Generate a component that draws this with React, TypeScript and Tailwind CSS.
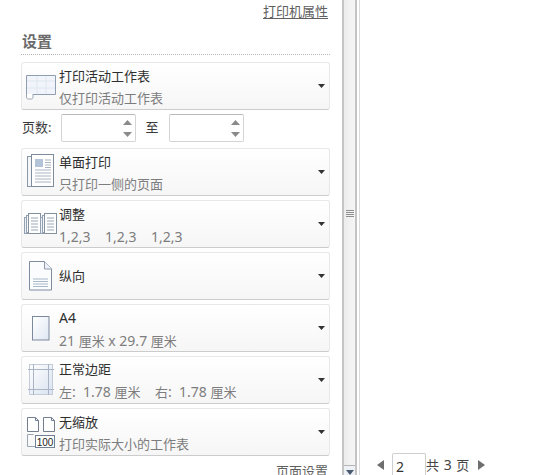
import React from "react";

const font = { fontFamily: '"Noto Sans", "Noto Sans CJK SC", sans-serif' };

function Caret() {
  return (
    <svg width="7" height="4" viewBox="0 0 7 4" className="shrink-0">
      <path d="M0 0h7L3.500 4z" fill="#333" />
    </svg>
  );
}

function SheetIcon() {
  return (
    <svg width="32" height="28" viewBox="0 0 32 28">
      <path d="M1.500 3.500h29v19h-25c-2 0-3 1.500-4 3z" fill="#f1f5fb" stroke="#8f9db0" />
      <path d="M1.500 22v3.500c0 1 1 1.500 2 1.500h3c1 0 1.500-1 1.500-2v-3" fill="#fff" stroke="#9aa6b6" />
      <path d="M12 4v18M21 4v18M2 9h28M2 16h28" stroke="#dfe6ef" />
    </svg>
  );
}

function SingleIcon() {
  return (
    <svg width="28" height="36" viewBox="0 0 28 36">
      <rect x="0.500" y="2.500" width="21" height="30" fill="#f4f6f9" stroke="#8b98a8" />
      <rect x="4.500" y="0.500" width="22" height="32" fill="#fff" stroke="#7f8c9c" />
      <rect x="8" y="5" width="8" height="8" fill="#b3c3d8" />
      <path d="M18 6h6M18 8.500h6M18 11h6M18 13.500h6M8 16h16M8 19h16M8 22h16M8 25h16M8 28h16" stroke="#a9b4c2" />
    </svg>
  );
}

function CollateIcon() {
  return (
    <svg width="34" height="24" viewBox="0 0 34 24">
      {[0, 16].map((x) => (
        <g key={x} transform={`translate(${x} 0)`}>
          <rect x="0.500" y="5.500" width="11" height="16" fill="#eef2f7" stroke="#93a0af" />
          <rect x="2.500" y="3.500" width="11" height="17" fill="#f4f6f9" stroke="#93a0af" />
          <rect x="4.500" y="1.500" width="12" height="20" fill="#fff" stroke="#84919f" />
          <path d="M7 6h7M7 9h7M7 12h7M7 15h7M7 18h7" stroke="#9aa7b7" />
        </g>
      ))}
    </svg>
  );
}

function PortraitIcon() {
  return (
    <svg width="24" height="30" viewBox="0 0 24 30">
      <path d="M0.500 0.500h15l7 7.500v21h-22z" fill="#fbfcfe" stroke="#7f8c9f" />
      <path d="M15.500 0.500v7.500h7" fill="#eef2f8" stroke="#8f9bab" />
      <path d="M4 18h15M4 20.500h15M4 23h15M4 25.500h15" stroke="#a9b8cb" />
    </svg>
  );
}

function A4Icon() {
  return (
    <svg width="18" height="25" viewBox="0 0 18 25">
      <defs>
        <linearGradient id="a4" x1="0" y1="0" x2="1" y2="1">
          <stop offset="0" stopColor="#ffffff" />
          <stop offset="1" stopColor="#dfe7f3" />
        </linearGradient>
      </defs>
      <rect x="0.500" y="0.500" width="16.500" height="23.500" fill="url(#a4)" stroke="#7c899b" />
    </svg>
  );
}

function MarginIcon() {
  return (
    <svg width="26" height="32" viewBox="0 0 26 32">
      <defs>
        <linearGradient id="mg" x1="0" y1="0" x2="1" y2="1">
          <stop offset="0" stopColor="#ffffff" />
          <stop offset="1" stopColor="#d9e2ef" />
        </linearGradient>
      </defs>
      <rect x="1.500" y="0.500" width="23" height="30" fill="url(#mg)" stroke="#c3ccd8" />
      <path d="M0 5.500h26M0 25.500h26M5.500 0v31M20.500 0v31" stroke="#a9b5c6" />
    </svg>
  );
}

function ScaleIcon() {
  return (
    <svg width="30" height="32" viewBox="0 0 30 32">
      <path d="M1.500 1.500h8l3 3v11h-11z" fill="#fff" stroke="#737f8e" />
      <path d="M9.500 1.500v3h3" fill="none" stroke="#737f8e" />
      <path d="M17.500 1.500h8l3 3v11h-11z" fill="#fff" stroke="#737f8e" />
      <path d="M25.500 1.500v3h3" fill="none" stroke="#737f8e" />
      <path d="M1.500 30.500v-12h6M1.500 30.500h8" fill="none" stroke="#9aa5b3" />
      <rect x="9.500" y="19.500" width="19" height="12" fill="#fff" stroke="#6f8097" />
      <text x="19" y="29.500" textAnchor="middle" fontSize="10" fontFamily="Liberation Sans" fill="#222">100</text>
    </svg>
  );
}

type CardProps = {
  icon: React.ReactNode;
  title: React.ReactNode;
  sub?: React.ReactNode;
};

function Card({ icon, title, sub }: CardProps) {
  return (
    <div className="h-12 shrink-0 flex items-center rounded-[3px] border border-[#e8e8e8] border-b-[#cccccc] bg-gradient-to-b from-[#ffffff] to-[#f6f6f7]">
      <div className="w-[37px] shrink-0 flex justify-center items-center pl-[1px]">{icon}</div>
      <div className={`flex-1 min-w-0 flex flex-col justify-center gap-[5px] text-[13px] leading-[17px] ${sub ? "pt-[2px]" : ""}`}>
        <div className="text-[#2e2e2e]">{title}</div>
        {sub ? <div className="text-[#7d7d7d] whitespace-pre">{sub}</div> : null}
      </div>
      <div className="w-[11px] shrink-0 flex">
        <Caret />
      </div>
    </div>
  );
}

function Spin({ className }: { className: string }) {
  return (
    <div className={`${className} h-[28px] rounded-[2px] border border-[#d4d4d4] border-t-[#b9b9b9] bg-white flex flex-col items-end justify-center gap-[7px] pr-[3px]`}>
      <svg width="9" height="5" viewBox="0 0 9 5">
        <path d="M4.500 0L9 5H0z" fill="#8a8a8a" />
      </svg>
      <svg width="9" height="5" viewBox="0 0 9 5">
        <path d="M0 0h9L4.500 5z" fill="#8a8a8a" />
      </svg>
    </div>
  );
}

function L({ children }: { children: React.ReactNode }) {
  return <span className="text-[14px]">{children}</span>;
}

export default function App() {
  return (
    <div className="w-[539px] h-[475px] overflow-hidden bg-white flex" style={font}>
      <div className="w-[342px] shrink-0 h-full overflow-hidden pl-[21px] pr-[12px] pt-[3px] flex flex-col">
        <div className="text-right text-[13px] leading-[17px] text-[#5f5f5f] underline underline-offset-2 pr-[2px]">打印机属性</div>
        <div className="mt-[12px] pl-[1px] text-[15px] leading-[18px] font-bold text-[#6a6a6a]">设置</div>
        <div className="mt-[4px] border-b border-dotted border-[#b5b5b5]" />
        <div className="mt-[7px]">
          <Card icon={<SheetIcon />} title="打印活动工作表" sub="仅打印活动工作表" />
        </div>
        <div className="mt-[4px] h-[28px] shrink-0 flex items-center text-[13px] text-[#3a3a3a]">
          <span className="w-[40px] pl-[1px]">页数:</span>
          <Spin className="w-[75px]" />
          <span className="w-[33px] text-center pr-[1px]">至</span>
          <Spin className="w-[75px]" />
        </div>
        <div className="mt-[6px] flex flex-col gap-1">
          <Card icon={<SingleIcon />} title="单面打印" sub="只打印一侧的页面" />
          <Card
            icon={<CollateIcon />}
            title="调整"
            sub={
              <span className="flex text-[14px]">
                <span className="w-[46px]">1,2,3</span>
                <span className="w-[46px]">1,2,3</span>
                <span className="w-[46px]">1,2,3</span>
              </span>
            }
          />
          <Card icon={<PortraitIcon />} title="纵向" />
          <Card icon={<A4Icon />} title={<L>A4</L>} sub={<><L>21 </L>厘米<L> x 29.7 </L>厘米</>} />
          <Card
            icon={<MarginIcon />}
            title="正常边距"
            sub={<>左<L>:  1.78 </L>厘米<L>    </L>右<L>:  1.78 </L>厘米</>}
          />
          <Card icon={<ScaleIcon />} title="无缩放" sub="打印实际大小的工作表" />
        </div>
        <div className="mt-[7px] text-right text-[13px] leading-[17px] text-[#5f5f5f] pr-[2px]">页面设置</div>
      </div>

      <div className="w-[15px] shrink-0 h-full flex flex-col border-x-2 border-[#c4c4c4] bg-gradient-to-r from-[#ececec] to-[#f6f6f6]">
        <div className="flex-1 flex flex-col items-center justify-center gap-[1px] pb-[39px]">
          <div className="w-[8px] h-[1px] bg-[#8f8f8f]" />
          <div className="w-[8px] h-[1px] bg-[#8f8f8f]" />
          <div className="w-[8px] h-[1px] bg-[#8f8f8f]" />
          <div className="w-[8px] h-[1px] bg-[#8f8f8f]" />
        </div>
        <div className="h-[10px] shrink-0 border-t border-[#b5b5b5] flex justify-center pt-[4px] bg-[#eef2f7]">
          <svg width="8" height="5" viewBox="0 0 8 5">
            <path d="M0 0h8L4 5z" fill="#4a5a70" />
          </svg>
        </div>
      </div>

      <div className="ml-[2px] flex-1 h-full border-l border-[#dcdcdc] flex flex-col justify-end">
        <div className="h-[22px] flex items-center pl-[17px] text-[13px] text-[#444]">
          <svg width="7" height="10" viewBox="0 0 7 10" className="mb-[-1px]">
            <path d="M7 0v10L0 5z" fill="#6e6e6e" />
          </svg>
          <div className="ml-[8px] w-[34px] h-[22px] rounded-t-[2px] border border-b-0 border-[#cfcfcf] pl-[3px] text-[14px] leading-[26px] text-[#333]">2</div>
          <span className="whitespace-pre tracking-[0.5px] pt-[2px]">共<span className="text-[14px]"> 3 </span>页</span>
          <svg width="7" height="10" viewBox="0 0 7 10" className="ml-[8px] mb-[-1px]">
            <path d="M0 0v10l7-5z" fill="#6e6e6e" />
          </svg>
        </div>
      </div>
    </div>
  );
}
